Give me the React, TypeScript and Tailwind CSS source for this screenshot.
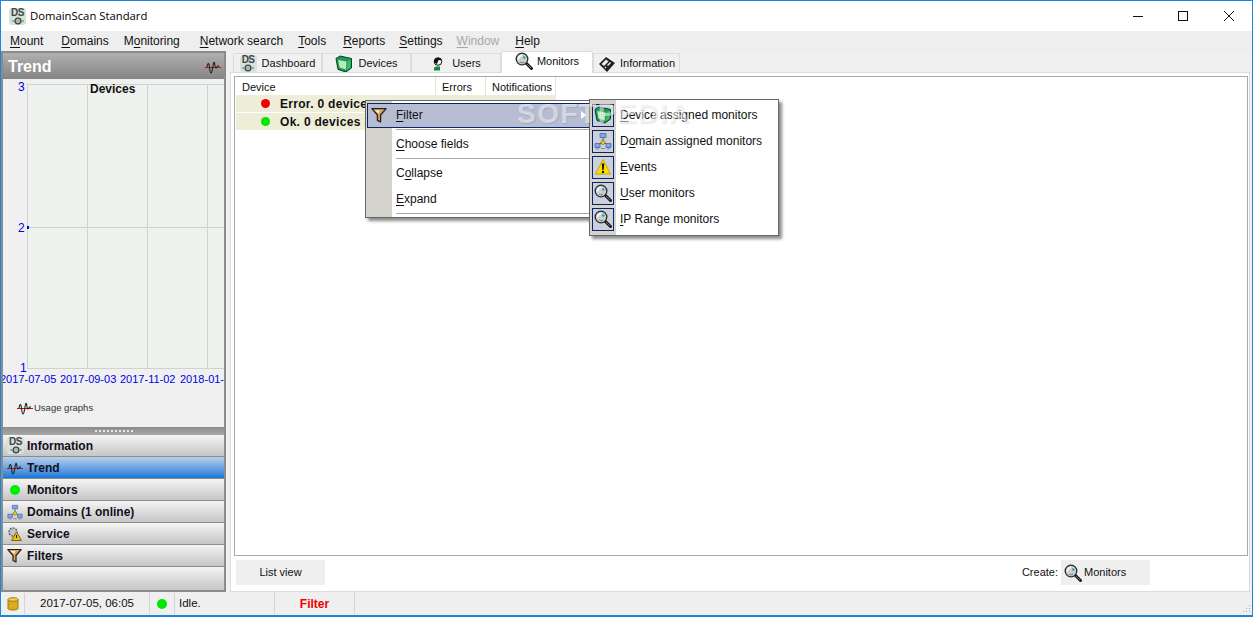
import type { ReactNode } from "react";

const font = "font-['Liberation_Sans',Arial,sans-serif]";

function U({ children }: { children: ReactNode }) {
  return <span className="underline underline-offset-2">{children}</span>;
}

function DsLogo() {
  return (
    <span className="relative flex h-[17px] w-[17px] shrink-0 flex-col items-center overflow-hidden rounded-[3px] bg-[#d5e2da]">
      <span className="text-[10px] leading-[9px] font-bold tracking-[-0.5px] text-[#444]">DS</span>
      <svg width="14" height="8" viewBox="0 0 14 8">
        <circle cx="7" cy="4" r="3" fill="#a9b6b4" stroke="#333" strokeWidth="1.2" />
        <path d="M1 4h2M11 4h2" stroke="#8fb0a0" strokeWidth="2" />
      </svg>
    </span>
  );
}

function Wave({ size = 16 }: { size?: number }) {
  return (
    <svg width={size} height={size} viewBox="0 0 16 16" className="shrink-0">
      <path d="M0 8.500h16" stroke="#c01010" strokeWidth="1" />
      <path d="M2 8c1-5 2-4 2.500 0s.5 6 1.500 6 1.500-4 2-7 1-5 1.500-3 .5 5 1.500 5 1-3 3-2" fill="none" stroke="#222" strokeWidth="1.100" />
    </svg>
  );
}

function Magnifier({ size = 18 }: { size?: number }) {
  return (
    <svg width={size} height={size} viewBox="0 0 18 18" className="shrink-0">
      <path d="M11 11l5.500 5.500" stroke="#1a1a1a" strokeWidth="3" strokeLinecap="round" />
      <path d="M12 12l4 4" stroke="#888" strokeWidth="0.800" />
      <circle cx="7" cy="7" r="5.800" fill="#c9d0d0" stroke="#2a2a2a" strokeWidth="1.300" />
      <path d="M3.500 7.500a4 4 0 0 1 3.500-4" fill="none" stroke="#fff" strokeWidth="1.600" />
      <path d="M5 10a4 4 0 0 0 4 .2" fill="none" stroke="#8a9090" strokeWidth="1.400" />
      <circle cx="9.200" cy="5.500" r="1.200" fill="#2aa0b0" />
    </svg>
  );
}

function DeviceBox({ size = 18 }: { size?: number }) {
  return (
    <svg width={size} height={size} viewBox="0 0 18 18" className="shrink-0">
      <path d="M1 3.500L5 1l11.500 2.500v9.500L11 17l-8-2.500z" fill="#1c9a50" stroke="#0c3f22" />
      <path d="M3.200 5L11.500 6.500 11 14.500 4.500 12.500z" fill="#b9e9bf" />
      <path d="M12.500 6.500L15.500 4.500v8L12 15z" fill="#2fc468" />
    </svg>
  );
}

function Funnel({ size = 15 }: { size?: number }) {
  return (
    <svg width={size} height={size} viewBox="0 0 15 15" className="shrink-0">
      <path d="M.8 1.500h13.400L9 7.500v6.500L6 12.500v-5z" fill="#d8a458" stroke="#222" strokeWidth="1.200" strokeLinejoin="round" />
      <path d="M3.500 3h5L7 6z" fill="#f8ecd0" />
    </svg>
  );
}

function Network({ size = 18 }: { size?: number }) {
  return (
    <svg width={size} height={size} viewBox="0 0 18 18" className="shrink-0">
      <path d="M9 6v6M4 13l5-3 5 3" stroke="#555" fill="none" />
      <path d="M6 1.500h6v4H6zM1 11.500h5v4H1zM12 11.500h5v4h-5z" fill="#7fa8e8" stroke="#4a6aa0" strokeWidth="0.800" />
      <path d="M7 16.500h4M2 16.800h3M13 16.800h3" stroke="#889" />
      <circle cx="9" cy="10.500" r="2" fill="#e8c830" stroke="#8a7410" strokeWidth="0.700" />
    </svg>
  );
}

function Warning() {
  return (
    <svg width="18" height="18" viewBox="0 0 18 18" className="shrink-0">
      <path d="M9 1.500l7.500 14.500h-15z" fill="#ffdc00" stroke="#c8a800" strokeLinejoin="round" />
      <path d="M7.800 5.500h2.400l-.5 6.500H8.300z" fill="#111" />
      <circle cx="9" cy="14" r="1.200" fill="#111" />
    </svg>
  );
}

function UserIcon() {
  return (
    <svg width="14" height="15" viewBox="0 0 14 15" className="shrink-0">
      <path d="M3 14.500c-.5-2.500.5-4 3-4h3v4z" fill="#0f8a3a" />
      <circle cx="7" cy="5.500" r="3.800" fill="#f4f4f4" stroke="#111" />
      <path d="M3.200 6.500C2 1.500 10 .5 10.700 4.500L7.500 4 6 8z" fill="#111" />
    </svg>
  );
}

function InfoIcon() {
  return (
    <svg width="18" height="18" viewBox="0 0 18 18" className="shrink-0">
      <path d="M1 9l7-7 9 6-8 9z" fill="#222" />
      <path d="M3.500 9L8 4.500l2.500 2-4.500 4.500z" fill="#eee" />
      <path d="M9 10l3-3 1 1-3 3zM6.500 12.500l1-1 1 1-1 1z" fill="#eee" />
    </svg>
  );
}

function ServiceIcon() {
  return (
    <svg width="16" height="16" viewBox="0 0 16 16" className="shrink-0">
      <circle cx="6" cy="6" r="4" fill="#c4c4c4" stroke="#666" strokeWidth="1.500" strokeDasharray="2 1" />
      <path d="M9.500 6l5 8.500h-10z" fill="#e8c020" stroke="#806800" />
      <path d="M9.500 9v3" stroke="#222" />
    </svg>
  );
}

function Dot({ color, size = "h-[10px] w-[10px]" }: { color: string; size?: string }) {
  return <span className={`block shrink-0 rounded-full ${size} ${color}`} />;
}

function Accordion({ icon, label, active }: { icon: ReactNode; label: string; active?: boolean }) {
  return (
    <div
      className={`flex h-[22px] items-center border-b border-[#8c8c8c] pl-[4px] text-[12px] font-bold text-[#10101c] ${
        active
          ? "bg-gradient-to-b from-[#b7cfe9] to-[#0b78d8]"
          : "bg-gradient-to-b from-[#f4f4f4] to-[#c6c6c6]"
      }`}
    >
      <span className="flex w-[20px] shrink-0 items-center justify-start">{icon}</span>
      {label}
    </div>
  );
}

function Tab({ icon, label, width, active, iconGap }: { icon: ReactNode; label: string; width: string; active?: boolean; iconGap: string }) {
  return (
    <div
      className={`flex shrink-0 items-center justify-center ${width} ${iconGap} ${
        active
          ? "relative z-10 mb-[-1px] h-[22px] rounded-t-[2px] border border-b-0 border-[#dcdcdc] bg-white pb-[3px]"
          : "h-[19px] border border-b-0 border-[#dcdcdc] bg-[#f0f0f0] pt-[1px]"
      }`}
    >
      {icon}
      <span>{label}</span>
    </div>
  );
}

function HeaderCell({ label, width }: { label: string; width: string }) {
  return <div className={`flex h-full shrink-0 items-center border-r border-[#e4e4e4] pt-[2px] pl-[6px] ${width}`}>{label}</div>;
}

function SubItem({ icon, children }: { icon: ReactNode; children: ReactNode }) {
  return (
    <div className="flex h-[26px] items-center">
      <span className="ml-[2px] flex h-[23px] w-[22px] shrink-0 items-center justify-center border border-[#0a246a] bg-[#cdd0da]">
        {icon}
      </span>
      <span className="ml-[6px] whitespace-nowrap">{children}</span>
    </div>
  );
}

function Chart() {
  return (
    <div className="relative h-[348px] shrink-0 bg-[#f0f0f0] text-[#0000e0]">
      {/* plot area */}
      <svg width="197" height="285" className="absolute top-[5px] left-[24px]">
        <rect width="197" height="285" fill="#eef2ee" />
        <path d="M.5 0V285M60.500 0V285M120.500 0V285M180.500 0V285M0 .5H197M0 143.500H197M0 284.500H197" stroke="#cfd3cf" fill="none" />
        <rect x="0" y="142" width="2" height="3" fill="#0000e0" />
      </svg>
      <span className="absolute top-[1px] left-[15px] text-[12px] leading-[14px]">3</span>
      <span className="absolute top-[142px] left-[15px] text-[12px] leading-[14px]">2</span>
      <span className="absolute top-[282px] left-[17px] text-[12px] leading-[14px]">1</span>
      <span className="absolute top-[3px] left-[87px] text-[12px] leading-[14px] font-bold text-[#111]">Devices</span>
      <div className="absolute top-[293px] left-0 flex w-full overflow-hidden text-[11px] leading-[14px] whitespace-nowrap">
        <span className="ml-[-3px] w-[60px] shrink-0">2017-07-05</span>
        <span className="w-[60px] shrink-0">2017-09-03</span>
        <span className="w-[60px] shrink-0">2017-11-02</span>
        <span className="w-[60px] shrink-0">2018-01-01</span>
      </div>
      <div className="absolute top-[321px] left-[14px] flex items-center gap-[1px] text-[9.500px] text-[#333]">
        <Wave size={16} />
        Usage graphs
      </div>
    </div>
  );
}

export default function App() {
  return (
    <div className={`${font} relative flex h-screen w-screen flex-col overflow-hidden border-x border-t border-b-2 border-[#1a86dc] bg-[#f0f0f0] text-[12px] text-[#111]`}>
      {/* Title bar */}
      <div className="flex h-[30px] shrink-0 items-center bg-white pl-[8px]">
        <DsLogo />
        <span className="ml-[4px] font-['Open_Sans',sans-serif] text-[11.300px] text-black">DomainScan Standard</span>
        <div className="ml-auto flex items-center pr-[17px]">
          <svg width="12" height="12" viewBox="0 0 12 12" className="mr-[33px]"><path d="M1 6.500h10" stroke="#111" /></svg>
          <svg width="12" height="12" viewBox="0 0 12 12" className="mr-[34px]"><rect x="1.500" y="1.500" width="9" height="9" fill="none" stroke="#111" /></svg>
          <svg width="12" height="12" viewBox="0 0 12 12"><path d="M1 1l10 10M11 1L1 11" stroke="#111" /></svg>
        </div>
      </div>

      {/* Menu bar */}
      <div className="flex h-[20px] shrink-0 items-center bg-[#eeeeee] pl-[9px] text-[12px] text-[#111]">
        <span className="mr-[18px]"><U>M</U>ount</span>
        <span className="mr-[15px]"><U>D</U>omains</span>
        <span className="mr-[20px]">M<U>o</U>nitoring</span>
        <span className="mr-[15px]"><U>N</U>etwork search</span>
        <span className="mr-[17px]"><U>T</U>ools</span>
        <span className="mr-[14px]"><U>R</U>eports</span>
        <span className="mr-[14px]"><U>S</U>ettings</span>
        <span className="mr-[16px] text-[#a8a8a8]"><U>W</U>indow</span>
        <span><U>H</U>elp</span>
      </div>

      <div className="flex min-h-0 flex-1">
        {/* Left panel */}
        <div className="flex w-[225px] shrink-0 flex-col border-2 border-[#8b8b8b]">
          <div className="flex h-[26px] shrink-0 items-center justify-between bg-gradient-to-b from-[#b0b0b0] to-[#858585] pt-[1px] pr-[3px] pl-[5px] text-[16px] font-bold text-white">
            Trend
            <Wave size={16} />
          </div>
          <Chart />
          <div className="flex h-[8px] shrink-0 items-center justify-center bg-gradient-to-b from-[#8c8c8c] to-[#a8a8a8] text-[0px]">
            <span className="h-[2px] w-[38px] bg-[repeating-linear-gradient(90deg,#e8e8e8_0,#e8e8e8_2px,transparent_2px,transparent_4px)]" />
          </div>
          <Accordion icon={<DsLogo />} label="Information" />
          <Accordion icon={<Wave />} label="Trend" active />
          <Accordion icon={<span className="ml-[3px] block"><Dot color="bg-[#00ee00]" /></span>} label="Monitors" />
          <Accordion icon={<Network size={16} />} label="Domains (1 online)" />
          <Accordion icon={<ServiceIcon />} label="Service" />
          <Accordion icon={<Funnel />} label="Filters" />
          <div className="flex-1 bg-gradient-to-b from-[#f4f4f4] to-[#c6c6c6]" />
        </div>

        {/* Right side */}
        <div className="flex min-w-0 flex-1 flex-col pr-[2px] pl-[4px]">
          <div className="ml-[3px] flex h-[21px] shrink-0 items-end text-[11px]">
            <Tab icon={<DsLogo />} label="Dashboard" width="w-[89px]" iconGap="gap-[5px]" />
            <Tab icon={<DeviceBox />} label="Devices" width="w-[89px]" iconGap="gap-[5px]" />
            <Tab icon={<UserIcon />} label="Users" width="w-[90px]" iconGap="gap-[7px]" />
            <Tab icon={<Magnifier />} label="Monitors" width="w-[92px]" iconGap="gap-[4px]" active />
            <Tab icon={<InfoIcon />} label="Information" width="w-[87px]" iconGap="gap-[4px]" />
          </div>
          <div className="flex min-h-0 flex-1 flex-col border border-[#dcdcdc] bg-white pt-[3px] pr-[1px] pb-[6px] pl-[3px]">
            <div className="min-h-0 flex-1 border border-[#a8a8a8] bg-white pl-[1px]">
              <div className="flex h-[18px] text-[11px]">
                <HeaderCell label="Device" width="w-[200px]" />
                <HeaderCell label="Errors" width="w-[50px]" />
                <HeaderCell label="Notifications" width="w-[70px]" />
              </div>
              <div className="w-[320px] text-[12px] font-bold text-[#111]">
                <div className="flex h-[17px] items-center bg-[#eeeed8] pl-[25px]">
                  <Dot color="bg-[#f00000]" size="h-[9px] w-[9px]" />
                  <span className="ml-[10px] tracking-[0.3px]">Error. 0 devices</span>
                </div>
                <div className="mt-[1px] flex h-[17px] items-center bg-[#eeeed8] pl-[25px]">
                  <Dot color="bg-[#00e800]" size="h-[9px] w-[9px]" />
                  <span className="ml-[10px] tracking-[0.3px]">Ok. 0 devices ...</span>
                </div>
              </div>
            </div>
            <div className="mt-[4px] flex h-[25px] shrink-0 items-center justify-between pr-[98px] pl-[2px] text-[11px]">
              <div className="flex h-full w-[89px] items-center justify-center bg-[#efefef]">List view</div>
              <div className="flex h-full items-center">
                <span className="mr-[3px]">Create:</span>
                <div className="flex h-full w-[89px] items-center gap-[2px] bg-[#efefef] pl-[3px]">
                  <Magnifier />
                  Monitors
                </div>
              </div>
            </div>
          </div>
        </div>
      </div>

      {/* Status bar */}
      <div className="relative flex h-[23px] shrink-0 items-center bg-[#efefef] text-[11.500px]">
        <div className="flex h-[21px] w-[24px] items-center justify-center border-r border-[#d4d4d4]">
          <svg width="12" height="14" viewBox="0 0 12 14">
            <path d="M1 2.500v9c0 2 10 2 10 0v-9z" fill="#e0a820" stroke="#a07810" />
            <ellipse cx="6" cy="2.500" rx="5" ry="1.800" fill="#f4d060" stroke="#a07810" />
          </svg>
        </div>
        <div className="flex h-[21px] w-[125px] items-center justify-center border-r border-[#d4d4d4]">2017-07-05, 06:05</div>
        <div className="flex h-[21px] w-[25px] items-center justify-center border-r border-[#d4d4d4]">
          <Dot color="bg-[#00e800]" />
        </div>
        <div className="flex h-[21px] w-[100px] items-center border-r border-[#d4d4d4] pl-[4px]">Idle.</div>
        <div className="flex h-[21px] w-[80px] items-center justify-center border-r border-[#d4d4d4] text-[12px] font-bold text-[#f00000]">Filter</div>
        <svg width="10" height="10" viewBox="0 0 10 10" className="absolute right-[1px] bottom-[1px]">
          <path d="M8 1h1v1H8zM5 4h1v1H5zM8 4h1v1H8zM2 7h1v1H2zM5 7h1v1H5zM8 7h1v1H8z" fill="#aaa" />
        </svg>
      </div>

      {/* Context menu */}
      <div className="absolute top-[99px] left-[364px] h-[118px] w-[226px] border border-[#666] bg-white text-[12px] shadow-[3px_3px_3px_rgba(0,0,0,0.45)]">
        <div className="absolute top-0 bottom-0 left-0 w-[26px] bg-[#d4d4cc]" />
        <div className="relative mt-[2px] ml-[1px] flex h-[25px] items-center border border-[#0a246a] bg-[#b6bdd2] pb-[1px] pl-[3px]">
          <Funnel size={16} />
          <span className="ml-[9px]"><U>F</U>ilter</span>
          <svg width="5" height="8" viewBox="0 0 5 8" className="absolute right-[3px]"><path d="M0 0l5 4-5 4z" fill="#fff" /></svg>
        </div>
        <div className="relative mt-[1px] ml-[30px] h-[1px] bg-[#aaa]" />
        <div className="relative flex h-[28px] items-center pl-[30px]"><span><U>C</U>hoose fields</span></div>
        <div className="relative ml-[30px] h-[1px] bg-[#aaa]" />
        <div className="relative flex h-[28px] items-center pl-[30px]"><span>C<U>o</U>llapse</span></div>
        <div className="relative flex h-[24px] items-center pl-[30px]"><span><U>E</U>xpand</span></div>
        <div className="relative mt-[2px] ml-[30px] h-[1px] bg-[#aaa]" />
      </div>

      {/* Filter submenu */}
      <div className="absolute top-[98px] left-[588px] h-[137px] w-[190px] border border-[#666] bg-white pt-[2px] text-[12px] shadow-[3px_3px_3px_rgba(0,0,0,0.45)]">
        <div className="absolute top-0 bottom-0 left-0 w-[26px] bg-[#d4d4cc]" />
        <div className="relative">
          <SubItem icon={<DeviceBox />}><U>D</U>evice assigned monitors</SubItem>
          <SubItem icon={<Network />}>D<U>o</U>main assigned monitors</SubItem>
          <SubItem icon={<Warning />}><U>E</U>vents</SubItem>
          <SubItem icon={<Magnifier />}><U>U</U>ser monitors</SubItem>
          <SubItem icon={<Magnifier />}><U>I</U>P Range monitors</SubItem>
        </div>
      </div>

      {/* Softpedia watermark */}
      <span className="pointer-events-none absolute top-[95px] left-[516px] text-[28px] leading-[36px] font-bold tracking-[1.500px] text-white/50 [text-shadow:1px_1px_1px_rgba(0,0,0,0.1)]">SOFTPEDIA</span>
    </div>
  );
}
